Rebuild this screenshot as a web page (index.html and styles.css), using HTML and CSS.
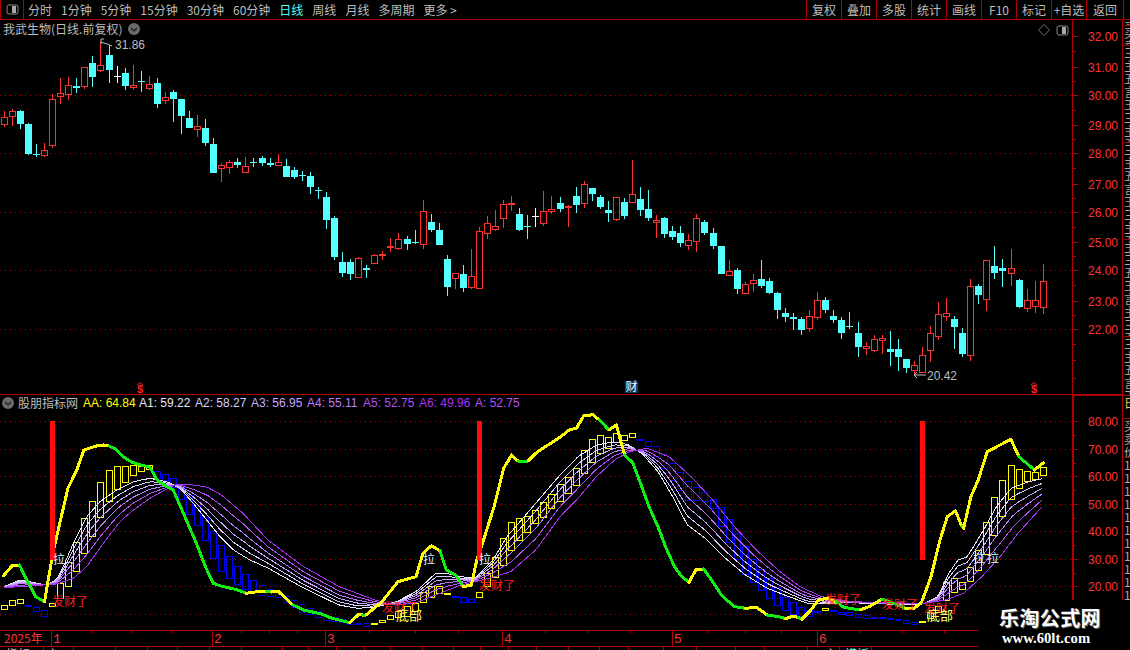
FILE: index.html
```html
<!DOCTYPE html>
<html lang="zh-CN">
<head>
    <meta charset="UTF-8">
    <title>我武生物 日线</title>
    <link rel="stylesheet" href="styles.css">
</head>
<body>
    <div class="toolbar">
        <div class="panel-btn">
            <svg width="13" height="11" viewBox="0 0 13 11"><rect x="1" y="1" width="11" height="9" rx="2" class="icon-box"/><rect x="6" y="2" width="4" height="7" class="icon-fill"/></svg>
        </div>
        <div class="tabs">
            <span class="tab t-sm">分时</span>
            <span class="tab">1分钟</span>
            <span class="tab">5分钟</span>
            <span class="tab">15分钟</span>
            <span class="tab">30分钟</span>
            <span class="tab">60分钟</span>
            <span class="tab active">日线</span>
            <span class="tab">周线</span>
            <span class="tab">月线</span>
            <span class="tab">多周期</span>
            <span class="tab">更多 &gt;</span>
        </div>
        <div class="actions">
            <span class="action">复权</span>
            <span class="action">叠加</span>
            <span class="action">多股</span>
            <span class="action">统计</span>
            <span class="action">画线</span>
            <span class="action">F10</span>
            <span class="action">标记</span>
            <span class="action">+自选</span>
            <span class="action last">返回</span>
        </div>
        <div class="toolbar-end"></div>
    </div>

    <div class="workspace">
        <svg id="chart" width="1123" height="630" viewBox="0 20 1123 630"></svg>
        <div class="strip">
            <div class="group g5">买</div>
            <div class="group g20">买卖</div>
            <div class="group g97">三主五言王三主五</div>
            <div class="group g97">三主五言王三主五</div>
            <div class="group g97">主三五王言主三五</div>
            <div class="group g59">三主五言王</div>
            <div class="group g23 hi">日</div>
            <div class="group g39">买卖价</div>
            <div class="group g143">1111111111111</div>
        </div>

        <div class="pane-title main-title">
            <span>我武生物(日线.前复权)</span>
            <svg class="chevron" width="12" height="12" viewBox="0 0 12 12"><circle cx="6" cy="6" r="6"/><path d="M3 5l3 3 3-3"/></svg>
        </div>
        <div class="corner-icons">
            <svg width="12" height="12" viewBox="0 0 12 12"><path d="M6 .5L11.5 6 6 11.5.5 6z" class="icon-diamond"/></svg>
            <svg width="13" height="11" viewBox="0 0 13 11"><rect x="1" y="1" width="11" height="9" rx="2" class="icon-box"/><rect x="6" y="2" width="4" height="7" class="icon-fill"/></svg>
        </div>
        <div class="pane-title sub-title">
            <svg class="chevron" width="12" height="12" viewBox="0 0 12 12"><circle cx="6" cy="6" r="6"/><path d="M3 5l3 3 3-3"/></svg>
            <span class="sub-name">股朋指标网</span>
            <div class="legend">
                <span class="aa">AA: 64.84</span>
                <span class="a1">A1: 59.22</span>
                <span class="a2">A2: 58.27</span>
                <span class="a3">A3: 56.95</span>
                <span class="a4">A4: 55.11</span>
                <span class="a5">A5: 52.75</span>
                <span class="a6">A6: 49.96</span>
                <span class="a5">A: 52.75</span>
            </div>
        </div>
    </div>

    <div class="watermark">
        <div class="wm-name">乐淘公式网</div>
        <div class="wm-url">www.60lt.com</div>
    </div>

    <script src="chart.js"></script>
</body>
</html>
```

FILE: styles.css
```css
html, body {
    margin: 0;
    padding: 0;
    background-color: #000;
}
body {
    position: relative;
    width: 1130px;
    height: 650px;
    overflow: hidden;
    font-family: "Noto Sans CJK SC", "Liberation Sans", sans-serif;
    font-size: 12px;
    color: #bdbdbd;
}
.toolbar {
    display: flex;
    height: 19px;
    border-bottom: 1px solid #b00000;
    line-height: 19px;
}
.panel-btn {
    display: flex;
    align-items: center;
    justify-content: center;
    width: 22px;
    border-left: 1px solid #b00000;
    border-right: 1px solid #b00000;
    box-sizing: content-box;
}
.icon-box {
    fill: none;
    stroke: #8a8a8a;
}
.icon-fill {
    fill: #a8a8a8;
}
.icon-diamond {
    fill: none;
    stroke: #6c6c6c;
}
.tabs {
    display: flex;
    flex: 1;
    gap: 9px;
    padding-left: 4px;
}
.tab.active {
    color: #54ffff;
}
.actions {
    display: flex;
}
.action {
    width: 34px;
    border-left: 1px solid #b00000;
    text-align: center;
}
.action.last {
    width: 36px;
}
.toolbar-end {
    width: 6px;
    border-left: 1px solid #b00000;
}
.workspace {
    display: flex;
    height: 630px;
}
#chart {
    display: block;
    flex: none;
}
.strip {
    width: 6px;
    height: 580px;
    margin-left: 1px;
    overflow: hidden;
    color: #a8a8a8;
}
.group {
    box-sizing: border-box;
    width: 6px;
    overflow: hidden;
    border-top: 1px solid #b00000;
    line-height: 13px;
    word-break: break-all;
}
.g5 { height: 5px; border-top: 0; }
.g20 { height: 20px; }
.g97 { height: 97px; }
.g59 { height: 59px; }
.g23 { height: 23px; }
.g39 { height: 39px; }
.g143 { height: 143px; }
.hi { color: #e0d060; }
.pane-title {
    position: absolute;
    display: flex;
    align-items: center;
    height: 14px;
    line-height: 14px;
}
.main-title {
    top: 22px;
    left: 3px;
    gap: 6px;
}
.sub-title {
    top: 396px;
    left: 2px;
}
.sub-name {
    margin-left: 4px;
}
.chevron circle {
    fill: #6a6a6a;
}
.chevron path {
    fill: none;
    stroke: #1c1c1c;
    stroke-width: 1.2;
}
.corner-icons {
    position: absolute;
    top: 24px;
    left: 1038px;
    display: flex;
    align-items: center;
    gap: 6px;
}
.legend {
    display: flex;
    margin-left: 5px;
    font-family: "Liberation Sans", sans-serif;
}
.legend span {
    width: 56px;
    white-space: nowrap;
}
.aa { color: #ffff00; }
.a1 { color: #e6e6fa; }
.a2 { color: #d6ccff; }
.a3 { color: #c8a8ff; }
.a4 { color: #bb7cff; }
.a5 { color: #b450f5; }
.a6 { color: #a832f0; }

/* chart parts */
.cand-up-body { fill: none; stroke: #ff3232; }
.cand-up { fill: #ff3232; }
.cand-down { fill: #54ffff; }
.cand-doji { fill: #fff; }
.box-y { fill: none; stroke: #ffff00; }
.box-b { fill: none; stroke: #0000ff; }
.dash-y { fill: #ffff00; }
.dash-b { fill: #0000ff; }
.grid {
    stroke: #b00000;
    stroke-dasharray: 1 4;
}
.frame { fill: #b00000; }
.bar { fill: #ff0d0d; }
.thin {
    fill: none;
    stroke-width: 1;
}
.thick {
    fill: none;
    stroke-width: 3;
    stroke-linejoin: round;
    stroke-linecap: round;
}
.axis-text {
    font-family: "Liberation Sans", sans-serif;
    font-size: 12px;
    fill: #ff3232;
}
.time-text {
    font-family: "Liberation Mono", monospace;
    font-size: 13px;
    fill: #ff3232;
}
.year-text {
    font-size: 12px;
    fill: #ff3232;
}
.price-note {
    font-family: "Liberation Sans", sans-serif;
    font-size: 12px;
    fill: #bdbdbd;
}
.note-line {
    fill: none;
    stroke: #bdbdbd;
}
.fa { font-size: 12px; fill: #ff2020; }
.la { font-size: 12px; fill: #d8f8ff; }
.di { font-size: 13px; fill: #ffff66; }
.mark-s {
    font-family: "Liberation Sans", sans-serif;
    font-size: 11px;
    font-weight: bold;
    fill: #ff2020;
}
.mark-hat {
    fill: none;
    stroke: #ff2020;
}
.mark-cai-bg { fill: #0a3c64; }
.mark-cai { font-size: 12px; fill: #e8f4ff; }
.tab-clip { font-size: 12px; fill: #bdbdbd; }
.tab-clip.on { fill: #54ffff; }
.watermark {
    position: absolute;
    left: 978px;
    top: 600px;
    width: 152px;
    height: 50px;
    background-color: #000;
    color: #fff;
}
.wm-name {
    margin: 4px 0 0 21px;
    font-size: 20px;
    font-weight: 700;
    line-height: 27px;
    letter-spacing: 0.4px;
    text-shadow: 1px 1px 0 #666;
}
.wm-url {
    margin-left: 24px;
    font-family: "Liberation Serif", serif;
    font-size: 14.7px;
    font-weight: bold;
    line-height: 15px;
}
```

FILE: chart.js
```js
const svg = document.getElementById('chart');
const NS = 'http://www.w3.org/2000/svg';

function el(name, attrs, text) {
    const node = document.createElementNS(NS, name);
    for (const key in attrs) node.setAttribute(key, attrs[key]);
    if (text) node.textContent = text;
    svg.appendChild(node);
    return node;
}

function box(x, y, w, h, cls) {
    el('rect', { x, y, width: w, height: h, class: cls, 'shape-rendering': 'crispEdges' });
}

function label(x, y, text, cls) {
    el('text', { x, y, class: cls }, text);
}

function col(i) {
    return Math.floor(4.3 + i * 8.054);
}

// type, high, body top, body bottom, low
const candles = [
    ['r',111,117,125,127],['r',109,111,117,126],['c',110,111,124,129],['c',123,124,154,155],['c',144,154,155,157],
    ['r',143,150,156,157],['r',94,99,146,148],['r',78,93,97,104],['r',77,85,95,100],['c',78,86,88,93],
    ['r',67,67,87,89],['c',56,63,77,87],['r',42,65,71,72],['c',45,55,70,83],['w',66,76,77,83],
    ['c',68,73,86,90],['r',65,85,88,90],['c',71,81,82,92],['r',76,84,89,90],['c',78,83,104,108],
    ['r',92,97,101,104],['c',90,92,99,122],['c',99,99,116,134],['c',111,118,128,128],['r',115,126,130,137],
    ['c',119,128,143,146],['c',138,144,173,173],['r',163,165,169,182],['r',160,162,168,174],['c',158,162,165,168],
    ['r',157,166,173,173],['c',158,162,163,167],['c',156,158,163,166],['c',158,163,165,167],['r',154,162,166,166],
    ['c',159,166,177,177],['c',167,170,177,179],['c',171,175,176,181],['c',172,176,187,194],['c',187,190,191,199],
    ['c',192,197,220,229],['c',216,218,257,260],['c',252,262,273,277],['c',259,262,274,280],['r',257,258,278,278],
    ['c',265,268,270,278],['r',254,255,264,264],['r',251,254,256,260],['r',238,246,248,252],['r',233,239,249,250],
    ['c',236,239,244,250],['c',230,242,243,244],['r',200,211,245,249],['c',214,222,230,232],['c',223,230,245,245],
    ['c',255,259,287,296],['r',273,273,279,289],['c',265,274,288,292],['r',249,276,288,289],['r',227,231,289,289],
    ['r',216,223,234,239],['r',210,226,230,231],['r',200,204,219,228],['r',196,203,205,211],['c',208,214,230,231],
    ['c',215,226,227,239],['w',208,216,217,227],['r',191,211,224,226],['r',196,209,212,214],['c',197,203,209,212],
    ['r',205,206,208,227],['c',187,196,205,213],['r',181,184,204,208],['c',188,188,194,201],['c',195,197,207,209],
    ['c',201,210,213,222],['r',197,197,220,221],['c',198,202,216,219],['r',160,194,203,203],['c',187,199,210,216],
    ['c',190,209,218,221],['r',215,220,223,238],['c',217,218,234,238],['c',226,231,237,240],['c',226,233,243,247],
    ['r',234,240,246,250],['r',214,218,242,252],['c',220,222,233,235],['c',228,233,246,249],['c',246,246,274,274],
    ['r',260,271,276,276],['c',268,270,289,294],['r',282,284,294,294],['r',274,280,284,292],['c',260,279,286,288],
    ['c',278,281,293,294],['c',292,293,310,319],['c',308,313,317,322],['c',313,317,319,330],['c',317,319,330,335],
    ['r',310,316,329,332],['r',292,300,318,320],['c',297,300,310,313],['c',310,316,320,323],['c',317,320,333,339],
    ['c',312,326,327,329],['c',322,333,347,357],['r',342,346,349,355],['r',335,339,351,352],['r',335,338,341,354],
    ['c',331,349,352,366],['c',339,349,357,371],['c',359,359,368,373],['r',361,365,371,376],['r',347,355,373,373],
    ['r',326,333,351,362],['r',302,314,337,340],['r',298,313,317,321],['c',316,319,327,349],['c',328,333,354,357],
    ['r',279,286,356,361],['c',284,286,295,304],['r',260,260,300,311],['c',246,266,273,279],['c',259,268,271,287],
    ['r',249,268,274,286],['c',279,280,307,308],['r',289,300,309,312],['r',281,300,307,313],['r',264,281,308,314]
];

// indicator boxes under the ribbon: colour, top, bottom
const bricks = [
    ['y',605,610],['y',600,606],['y',599,604],['b',605,606],['b',607,612],['b',610,617],['y',603,607],['y',583,599],['y',562,587],['y',542,572],
    ['y',518,554],['y',501,537],['y',482,518],['y',470,502],['y',466,490],['y',466,483],['y',465,476],['y',466,472],['y',465,470],['b',471,479],
    ['b',474,481],['b',478,488],['b',485,500],['b',495,515],['b',505,526],['b',517,541],['b',531,559],['b',545,572],['b',556,579],['b',566,585],
    ['b',574,590],['b',580,592],['b',585,596],['b',589,597],['b',592,598],['b',596,603],['b',600,608],['b',604,613],['b',608,615],['b',611,618],
    ['b',615,621],['b',617,622],['b',619,623],['b',622,625],['b',623,625],['b',623,627],['y',623,624],['y',620,623],['y',615,620],['y',611,618],
    ['y',606,617],['y',603,612],['y',592,603],['y',586,598],['y',586,594],['y',593,594],['b',596,597],['b',597,603],['b',599,603],['y',592,598],
    ['y',573,587],['y',557,578],['y',538,566],['y',522,551],['y',518,541],['y',516,533],['y',510,524],['y',502,518],['y',494,509],['y',484,502],
    ['y',477,494],['y',468,486],['y',450,474],['y',439,463],['y',435,454],['y',437,449],['y',433,443],['y',435,441],['y',433,438],['b',439,440],
    ['b',441,447],['b',446,457],['b',454,469],['b',463,481],['b',472,491],['b',481,501],['b',487,501],['b',492,502],['b',499,509],['b',507,527],
    ['b',519,543],['b',533,560],['b',546,575],['b',559,583],['b',569,591],['b',578,599],['b',587,606],['b',597,611],['b',602,615],['b',607,617],
    ['b',610,617],['b',611,612],['y',608,611],['b',610,611],['b',612,615],['b',612,616],['b',614,618],['b',615,619],['b',617,619],['b',617,619],
    ['b',618,619],['b',619,620],['b',620,624],['b',622,625],['y',621,622],['y',612,619],['y',606,613],['y',582,601],['y',578,593],['y',582,590],
    ['y',567,582],['y',550,571],['y',522,555],['y',497,536],['y',480,517],['y',465,500],['y',469,489],['y',471,482],['y',472,480],['y',467,476]
];

const ribbonTop = [
    [4,586.7],[20,580],[30,581.7],[45,585],[56.7,580],[63.3,566.7],[73.3,543.3],[86.7,516.7],[100,501.7],[116.7,490],[133.3,481.7],[150,478.3],
    [166.7,481.7],[180,488.3],[193.3,503.3],[206.7,520],[220,536.7],[233.3,550],[250,560],[267.9,568],[303.6,588],[339,605],[357,608.3],[375,607.3],
    [396.4,601.7],[416,591.7],[435.7,573.3],[446.4,573.3],[460.7,576.7],[475,578],[492.9,560],[507,536.7],[535.7,503.3],[560,475],[578,456.7],
    [596.4,445],[614.5,441.7],[629,445],[643.6,455],[658,471.7],[672.7,496.7],[687.3,525],[705.5,538.3],[723.6,556.7],[745.5,575],[767.3,588.3],
    [789,596.7],[807.3,603.3],[825.5,603.3],[851,602.7],[887.3,604],[923.6,604],[938,596.7],[949,573],[958,560],[967.3,556.7],[983.6,530],
    [996.4,506.7],[1011,488.3],[1029,481.7],[1043.6,478.3]
];
const ribbonBottom = [
    [4,587.7],[43.3,585],[56.7,584],[73.3,578.3],[86.7,566.7],[103.3,543.3],[120,521.7],[133.3,510],[150,498.3],[166.7,489],[176.7,484],[193.3,485],
    [207,487],[221.4,495],[242.9,513.3],[267.9,540],[303.6,566.7],[339.3,586.7],[375,600],[392.9,605],[416,602.7],[435.7,595],[460.7,585],[489.3,578.3],
    [510.7,571.7],[535.7,550],[560,516.7],[578,498.3],[596.4,476.7],[614.5,460],[629,451.7],[647.3,448.3],[669,456.7],[691,476.7],[712.7,500],
    [734.5,526.7],[756.4,550],[778,570],[800,586.7],[821.8,596.7],[851,601.7],[887.3,602.7],[923.6,603.3],[945.5,600],[963.6,593.3],[981.8,576.7],
    [1000,556.7],[1018,533.3],[1043.6,505]
];

// AA line, each run keeps one colour
const runs = [
    ['y',[[3.6,575.7],[12.5,565.3],[19.6,565]]],
    ['g',[[19.6,565],[25,576.7],[31.4,588.3],[35.7,596.7],[44.6,601.7]]],
    ['y',[[44.6,601.7],[48.2,580],[53.6,550],[59,526.7],[67.9,488.3],[76.8,470],[83.9,450],[96.4,446],[103.6,445],[109,446]]],
    ['g',[[109,446],[116,449.3],[123.2,456.7],[132,462.3],[141,465],[150,467.3],[157,480],[164.3,485],[173.2,490],[182,510],[196.4,543.3],[205.4,566.7],[213.2,583.3],[223.2,586.7],[235.7,589.3],[246.4,593.3]]],
    ['y',[[246.4,593.3],[257,591.7],[266,591]]],
    ['g',[[266,591],[271.4,592]]],
    ['y',[[271.4,592],[277.9,591],[285.7,598.3],[292.9,605]]],
    ['g',[[292.9,605],[303.6,610],[321.4,614],[332,618.3],[350,622.7]]],
    ['y',[[350,622.7],[359,614],[362.5,615]]],
    ['g',[[362.5,615],[366,615]]],
    ['y',[[366,615],[382,601.7],[398,581.7],[416,576.7],[423,553.3],[431.4,545.7],[440,550.7]]],
    ['g',[[440,550.7],[446.4,570],[455.4,575],[463.2,586.7]]],
    ['y',[[463.2,586.7],[471.4,585],[476.8,560],[485.7,533.3],[494.6,505],[503.6,468.3],[511.8,455],[517.9,461]]],
    ['g',[[517.9,461],[527.9,461]]],
    ['y',[[527.9,461],[537.5,451.7],[560,437.3],[569,430],[576.4,428.3],[583.6,416],[592.7,414.7],[599.3,420]]],
    ['g',[[599.3,420],[609,430]]],
    ['y',[[609,430],[616.4,425],[621.8,445],[624.7,455]]],
    ['g',[[624.7,455],[632.7,462.7],[641.8,486.7],[649,506.7],[658,526.7],[665.5,546.7],[674.5,566.7],[681.8,576.7],[689,582.3]]],
    ['y',[[689,582.3],[696.4,569],[703.6,569]]],
    ['g',[[703.6,569],[712.7,581.7],[721.8,595.7],[734.5,606.7],[745.5,608.3]]],
    ['y',[[745.5,608.3],[756.4,607.3],[767.3,615]]],
    ['g',[[767.3,615],[781.8,617.3],[785.5,618.7]]],
    ['y',[[785.5,618.7],[792.7,616.3],[798,617.3]]],
    ['g',[[798,617.3],[801.8,619.3]]],
    ['y',[[801.8,619.3],[811,610],[818.2,600],[827.3,598.3],[836.4,601.7]]],
    ['g',[[836.4,601.7],[843.6,607.3],[860,610]]],
    ['y',[[860,610],[869,606.7],[881.8,599.3]]],
    ['g',[[881.8,599.3],[887.3,600.7],[905.5,608.3]]],
    ['y',[[905.5,608.3],[914.5,608.3],[921.8,601.7],[931,576.7],[940,540],[947.3,516.7],[955.6,510.7],[961.8,526.7]]],
    ['g',[[961.8,526.7],[963.6,528.3]]],
    ['y',[[963.6,528.3],[970.9,496.7],[978.2,480],[987.3,451.7],[1010.9,439.3],[1018.9,456.7]]],
    ['g',[[1018.9,456.7],[1034.5,470]]],
    ['y',[[1034.5,470],[1043.6,462.7]]]
];

function yAt(line, x) {
    for (let i = 1; i < line.length; i++) {
        if (x <= line[i][0]) {
            const a = line[i - 1], b = line[i];
            return a[1] + (b[1] - a[1]) * (x - a[0]) / (b[0] - a[0]);
        }
    }
    return line[line.length - 1][1];
}

function drawGrid() {
    [95, 153, 212, 270, 329].forEach(y => el('line', { x1: 0, x2: 1072, y1: y + 0.5, y2: y + 0.5, class: 'grid', 'shape-rendering': 'crispEdges' }));
    [421, 449, 476, 504, 531, 559, 586, 614].forEach(y => el('line', { x1: 0, x2: 1072, y1: y + 0.5, y2: y + 0.5, class: 'grid', 'shape-rendering': 'crispEdges' }));
}

function drawCandles() {
    candles.forEach((c, i) => {
        const x = col(i);
        const [type, high, top, bottom, low] = c;
        const h = Math.max(bottom - top, 1);
        if (type === 'r') {
            box(x, high, 1, Math.max(top - high, 0), 'cand-up');
            box(x, bottom, 1, Math.max(low - bottom, 0), 'cand-up');
            if (h < 3) box(x - 3, top, 7, h, 'cand-up');
            else box(x - 2.5, top + 0.5, 6, h - 1, 'cand-up-body');
        } else {
            const cls = type === 'w' ? 'cand-doji' : 'cand-down';
            box(x, high, 1, low - high, cls);
            box(x - 3, top, 7, h, cls);
        }
    });
}

function drawBricks() {
    bricks.forEach((b, i) => {
        const x = col(i);
        const [c, top, bottom] = b;
        if (bottom - top < 2) box(x - 3, top, 7, 2, 'dash-' + c);
        else box(x - 2.5, top + 0.5, 6, bottom - top - 1, 'box-' + c);
    });
}

function drawRibbon() {
    const spread = [0, 0.17, 0.35, 0.54, 0.76, 1];
    const colors = ['#e6e6fa', '#d6ccff', '#c8a8ff', '#bb7cff', '#b450f5', '#a832f0'];
    spread.forEach((t, n) => {
        const pts = [];
        for (let x = 4; x <= 1043; x += 3) {
            const y = yAt(ribbonTop, x) * (1 - t) + yAt(ribbonBottom, x) * t;
            pts.push(x + ',' + y.toFixed(1));
        }
        el('polyline', { points: pts.join(' '), class: 'thin', stroke: colors[n], 'shape-rendering': 'crispEdges' });
    });
}

function drawAA() {
    const colors = { y: '#ffff00', g: '#11ee11' };
    runs.forEach(run => {
        el('polyline', { points: run[1].map(p => p.join(',')).join(' '), class: 'thick', stroke: colors[run[0]], 'shape-rendering': 'crispEdges' });
    });
}

function drawFrame() {
    box(1072, 20, 1, 374, 'frame');
    box(1072, 395, 2, 205, 'frame');
    box(0, 394, 1073, 1, 'frame');
    box(1073, 394, 50, 2, 'frame');
    box(1122, 20, 1, 580, 'frame');

    const prices = [[36,'32.00'],[67,'31.00'],[95,'30.00'],[125,'29.00'],[153,'28.00'],[184,'27.00'],[212,'26.00'],[242,'25.00'],[270,'24.00'],[301,'23.00'],[329,'22.00']];
    prices.forEach(p => {
        box(1073, p[0], 5, 1, 'frame');
        label(1088, p[0] + 4.5, p[1], 'axis-text');
    });
    [51, 81, 110, 139, 168, 198, 227, 256, 285, 315, 344, 360, 378].forEach(y => box(1073, y, 3, 1, 'frame'));

    const levels = [[421,'80.00'],[449,'70.00'],[476,'60.00'],[504,'50.00'],[531,'40.00'],[559,'30.00'],[586,'20.00']];
    levels.forEach(p => {
        box(1074, p[0], 4, 1, 'frame');
        label(1088, p[0] + 5, p[1], 'axis-text');
    });
    [435, 463, 490, 518, 545, 573].forEach(y => box(1074, y, 2, 1, 'frame'));
}

function drawTimeAxis() {
    box(0, 630, 978, 1, 'frame');
    box(0, 646, 978, 1, 'frame');
    label(4, 643, '2025年', 'year-text');
    [[51, '1'], [212, '2'], [325, '3'], [502, '4'], [672, '5'], [817, '6']].forEach(t => {
        box(t[0], 631, 1, 15, 'frame');
        label(t[0] + 2, 643, t[1], 'time-text');
    });
    [92, 132, 172, 241, 269, 297, 369, 415, 458, 545, 587, 630, 708, 745, 781, 859, 902, 944].forEach(x => box(x, 631, 1, 2, 'frame'));
    [43, 73, 115, 147, 177, 209, 241, 282, 308, 336, 364, 390, 422, 453, 480, 508, 536, 568, 599, 628, 663, 696, 735, 764, 807, 839, 871]
        .forEach(x => box(x, 647, 1, 3, 'frame'));
    label(6, 659, '指标', 'tab-clip');
    label(47, 659, '主', 'tab-clip');
    label(825, 659, '主', 'tab-clip');
    label(845, 659, '模板', 'tab-clip on');
}

function drawNotes() {
    label(115, 49, '31.86', 'price-note');
    el('path', { d: 'M112 46Q108 44 104 43L101 42M101 39H104M101 39V44', class: 'note-line' });
    label(927, 380, '20.42', 'price-note');
    el('path', { d: 'M926 375H914M917 372L914 375L917 378', class: 'note-line' });

    [137, 1031].forEach(x => {
        label(x, 393, '$', 'mark-s');
        el('path', { d: 'M' + x + ' 385L' + (x + 3) + ' 382.5L' + (x + 6) + ' 385', class: 'mark-hat' });
    });
    box(625, 381, 13, 12, 'mark-cai-bg');
    label(625.5, 391, '财', 'mark-cai');

    [[52, 606], [382, 612], [479, 590], [825, 604], [882, 609], [924, 613]].forEach(p => label(p[0], p[1], '发财了', 'fa'));
    [[396, 620], [927, 620]].forEach(p => label(p[0], p[1], '底部', 'di'));
    [[53, 564], [423, 564], [479, 564], [973, 563], [987, 563]].forEach(p => label(p[0], p[1], '拉', 'la'));
}

drawGrid();
drawCandles();
drawBricks();
drawRibbon();
drawAA();
[50, 477, 920].forEach(x => box(x, 421, 5, 139, 'bar'));
drawFrame();
drawTimeAxis();
drawNotes();
```
